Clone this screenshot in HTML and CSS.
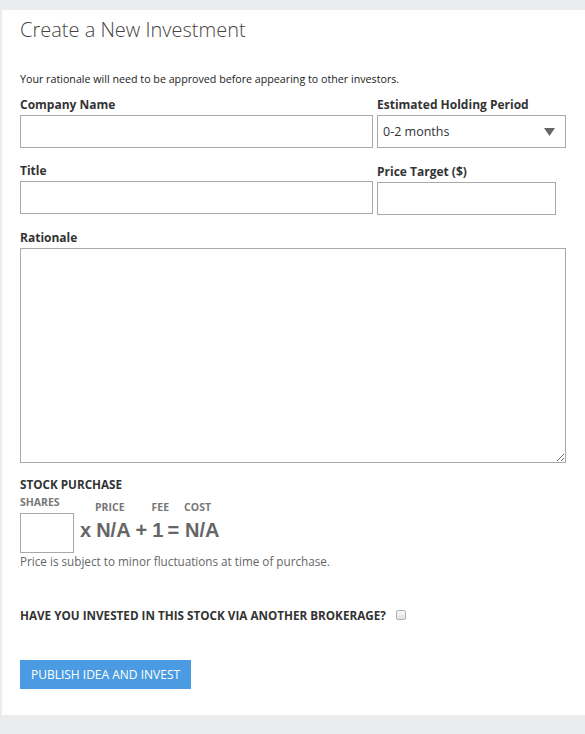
FILE: index.html
```html
<!DOCTYPE html>
<html>
<head>
<meta charset="utf-8">
<link rel="stylesheet" href="styles.css">
</head>
<body>
<div class="panel">
  <h1 class="title">Create a New Investment</h1>
  <p class="note">Your rationale will need to be approved before appearing to other investors.</p>

  <div class="row">
    <div class="col-left">
      <label class="label">Company Name</label>
      <input class="input" type="text">
    </div>
    <div class="col-right">
      <label class="label">Estimated Holding Period</label>
      <div class="select">
        <span>0-2 months</span>
        <svg class="caret" width="11" height="8" viewBox="0 0 11 8"><path d="M0 0 L11 0 L5.5 8 Z" fill="#666"/></svg>
      </div>
    </div>
  </div>

  <div class="row">
    <div class="col-left">
      <label class="label">Title</label>
      <input class="input" type="text">
    </div>
    <div class="col-right shift">
      <label class="label">Price Target ($)</label>
      <input class="input price" type="text">
    </div>
  </div>

  <div class="block">
    <label class="label">Rationale</label>
    <textarea class="textarea"></textarea>
  </div>

  <div class="stock">
    <div class="stock-title">STOCK PURCHASE</div>
    <div class="calc">
      <div class="shares-col">
        <div class="small shares-label">SHARES</div>
        <input class="shares" type="text">
      </div>
      <div class="formula">
        <div class="formula-labels">
          <span class="small l-price">PRICE</span>
          <span class="small l-fee">FEE</span>
          <span class="small l-cost">COST</span>
        </div>
        <div class="formula-values">
          <span class="v v-x">x</span>
          <span class="v v-price">N/A</span>
          <span class="v v-plus">+</span>
          <span class="v v-fee">1</span>
          <span class="v v-eq">=</span>
          <span class="v v-cost">N/A</span>
        </div>
      </div>
    </div>
    <div class="hint">Price is subject to minor fluctuations at time of purchase.</div>
  </div>

  <div class="question">
    <span>HAVE YOU INVESTED IN THIS STOCK VIA ANOTHER BROKERAGE?</span>
    <span class="checkbox"></span>
  </div>

  <button class="btn">PUBLISH IDEA AND INVEST</button>
</div>
</body>
</html>
```

FILE: styles.css
```css
* { box-sizing: border-box; }
html, body {
  margin: 0;
  padding: 0;
  background: #ebecee;
  font-family: "Open Sans", "Liberation Sans", sans-serif;
  color: #333;
}
body { padding-top: 10px; }
.panel {
  margin-left: 2px;
  background: #fff;
  height: 705px;
  padding: 6px 19px 0 18px;
}
.title {
  margin: 0;
  font-size: 20px;
  font-weight: 300;
  line-height: 28px;
  color: #444;
}
.note {
  margin: 28px 0 9px;
  font-size: 10.7px;
  line-height: 15px;
  color: #222;
}
.row {
  display: flex;
  gap: 4px;
  margin-bottom: 14px;
}
.col-left { width: 353px; }
.col-right { width: 189px; }
.shift { padding-top: 1px; }
.label {
  display: block;
  font-size: 12px;
  font-weight: 700;
  line-height: 17px;
  margin-bottom: 2px;
  color: #333;
}
.input {
  display: block;
  width: 100%;
  height: 33px;
  border: 1px solid #a9a9a9;
  margin: 0;
  padding: 0 6px;
  font: inherit;
  background: #fff;
}
.input.price { width: 179px; }
.select {
  height: 33px;
  border: 1px solid #a9a9a9;
  display: flex;
  align-items: center;
  justify-content: space-between;
  padding: 0 10px 0 5px;
  font-size: 12.5px;
  color: #333;
}
.caret { margin-top: 1px; }
.block { margin-bottom: 14px; }
.textarea {
  display: block;
  width: 546px;
  height: 215px;
  border: 1px solid #a9a9a9;
  margin: 0;
  resize: both;
  font: inherit;
}
.stock-title {
  font-size: 11.7px;
  font-weight: 700;
  line-height: 15px;
  color: #333;
}
.calc {
  display: flex;
  align-items: flex-start;
  margin-top: 3px;
}
.shares-col { display: flex; flex-direction: column; }
.small {
  font-size: 10.5px;
  font-weight: 700;
  line-height: 14px;
  color: #777;
}
.shares-label { margin-bottom: 4px; }
.shares {
  width: 54px;
  height: 40px;
  border: 1px solid #a9a9a9;
  margin: 0;
  padding: 0;
}
.formula { padding-top: 5px; }
.formula-labels { display: flex; }
.l-price { margin-left: 21px; }
.l-fee { margin-left: 27px; }
.l-cost { margin-left: 15px; }
.formula-values {
  display: flex;
  margin-top: 4px;
}
.v {
  font-family: "Liberation Sans", Arial, sans-serif;
  font-weight: 700;
  font-size: 20px;
  line-height: 24px;
  color: #666;
}
.v-x { margin-left: 6px; }
.v-price { margin-left: 5px; }
.v-plus { margin-left: 5px; }
.v-fee { margin-left: 5px; }
.v-eq { margin-left: 4px; }
.v-cost { margin-left: 6px; }
.hint {
  font-size: 11.7px;
  line-height: 16px;
  color: #666;
}
.question {
  margin-top: 38px;
  display: flex;
  align-items: center;
  font-size: 11.7px;
  font-weight: 700;
  line-height: 16px;
  color: #333;
}
.checkbox {
  display: inline-block;
  width: 10px;
  height: 10px;
  border: 1px solid #b0b0b0;
  border-radius: 2px;
  background: linear-gradient(#fafafa, #e2e2e2);
  margin-left: 10px;
}
.btn {
  display: block;
  margin-top: 37px;
  width: 171px;
  height: 29px;
  border: 0;
  background: #4a9be2;
  color: #fff;
  font-family: "Open Sans", sans-serif;
  font-size: 12px;
  padding: 0;
}
```
